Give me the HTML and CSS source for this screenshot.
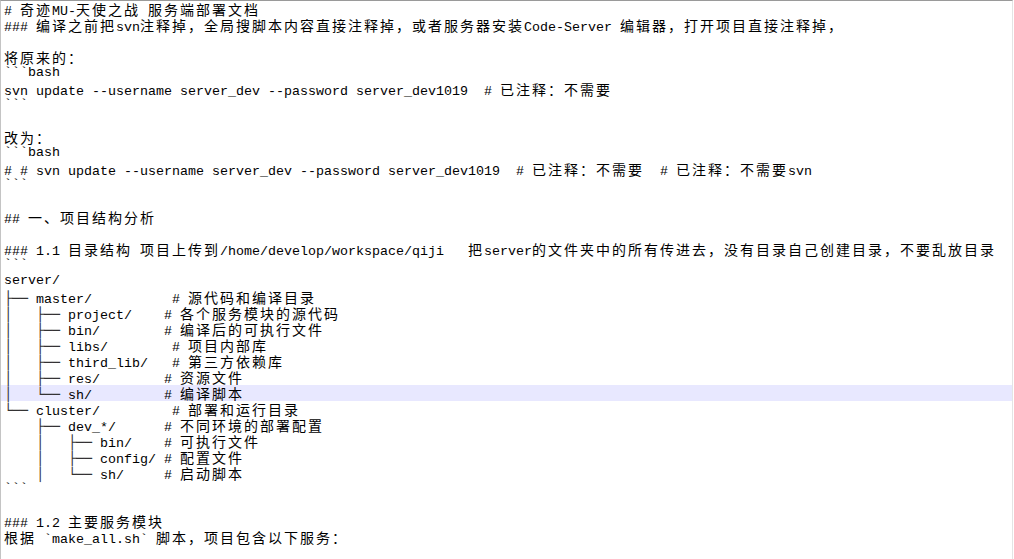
FILE: index.html
```html
<!DOCTYPE html>
<html lang="zh">
<head>
<meta charset="utf-8">
<title>README.md</title>
<link rel="stylesheet" href="styles.css">
</head>
<body>
<div class="editor">
<div class="ln"># <span class="c">奇迹</span>MU-<span class="c">天使之战</span> <span class="c">服务端部署文档</span></div>
<div class="ln">### <span class="c">编译之前把</span>svn<span class="c">注释掉，全局搜脚本内容直接注释掉，或者服务器安装</span>Code-Server <span class="c">编辑器，打开项目直接注释掉，</span></div>
<div class="ln"></div>
<div class="ln"><span class="c">将原来的：</span></div>
<div class="ln">```bash</div>
<div class="ln">svn update --username server_dev --password server_dev1019  # <span class="c">已注释：不需要</span></div>
<div class="ln">```</div>
<div class="ln"></div>
<div class="ln"><span class="c">改为：</span></div>
<div class="ln">```bash</div>
<div class="ln"># # svn update --username server_dev --password server_dev1019  # <span class="c">已注释：不需要</span>  # <span class="c">已注释：不需要</span>svn</div>
<div class="ln">```</div>
<div class="ln"></div>
<div class="ln">## <span class="c">一、项目结构分析</span></div>
<div class="ln"></div>
<div class="ln">### 1.1 <span class="c">目录结构</span> <span class="c">项目上传到</span>/home/develop/workspace/qiji   <span class="c">把</span>server<span class="c">的文件夹中的所有传进去，没有目录自己创建目录，不要乱放目录</span></div>
<div class="ln">```</div>
<div class="ln">server/</div>
<div class="ln"><span class="b">├──</span> master/          # <span class="c">源代码和编译目录</span></div>
<div class="ln"><span class="b">│</span>   <span class="b">├──</span> project/    # <span class="c">各个服务模块的源代码</span></div>
<div class="ln"><span class="b">│</span>   <span class="b">├──</span> bin/        # <span class="c">编译后的可执行文件</span></div>
<div class="ln"><span class="b">│</span>   <span class="b">├──</span> libs/        # <span class="c">项目内部库</span></div>
<div class="ln"><span class="b">│</span>   <span class="b">├──</span> third_lib/   # <span class="c">第三方依赖库</span></div>
<div class="ln"><span class="b">│</span>   <span class="b">├──</span> res/        # <span class="c">资源文件</span></div>
<div class="ln cur"><span class="b">│</span>   <span class="b">└──</span> sh/         # <span class="c">编译脚本</span></div>
<div class="ln"><span class="b">└──</span> cluster/         # <span class="c">部署和运行目录</span></div>
<div class="ln">    <span class="b">├──</span> dev_*/      # <span class="c">不同环境的部署配置</span></div>
<div class="ln">    <span class="b">│</span>   <span class="b">├──</span> bin/    # <span class="c">可执行文件</span></div>
<div class="ln">    <span class="b">│</span>   <span class="b">├──</span> config/ # <span class="c">配置文件</span></div>
<div class="ln">    <span class="b">│</span>   <span class="b">└──</span> sh/     # <span class="c">启动脚本</span></div>
<div class="ln">```</div>
<div class="ln"></div>
<div class="ln">### 1.2 <span class="c">主要服务模块</span></div>
<div class="ln"><span class="c">根据</span> `make_all.sh` <span class="c">脚本，项目包含以下服务：</span></div>
<div class="ln"></div>
</div>
</body>
</html>
```
FILE: styles.css
```css
html, body {
  margin: 0;
  padding: 0;
  background: #ffffff;
  overflow: hidden;
}

.editor {
  width: 1011px;
  height: 558px;
  border-top: 1px solid #9a9a9a;
  border-left: 1px solid #c4c4c4;
  border-right: 1px solid #e4e4e4;
  background: #ffffff;
  overflow: hidden;
  font-family: "Liberation Mono", "DejaVu Sans Mono", "Noto Sans CJK SC", monospace;
  font-size: 13.333px;
  color: #000000;
}

.ln {
  height: 16px;
  line-height: 16px;
  white-space: pre;
  padding-left: 3px;
}

.ln.cur {
  background: #e8e8ff;
}

.c {
  font-family: "Noto Sans CJK SC", sans-serif;
  font-size: 14px;
  letter-spacing: 2px;
  line-height: 16px;
}

.b {
  font-family: "DejaVu Sans Mono", monospace;
  font-size: 13.333px;
  letter-spacing: -0.03px;
  color: #333333;
}
```
